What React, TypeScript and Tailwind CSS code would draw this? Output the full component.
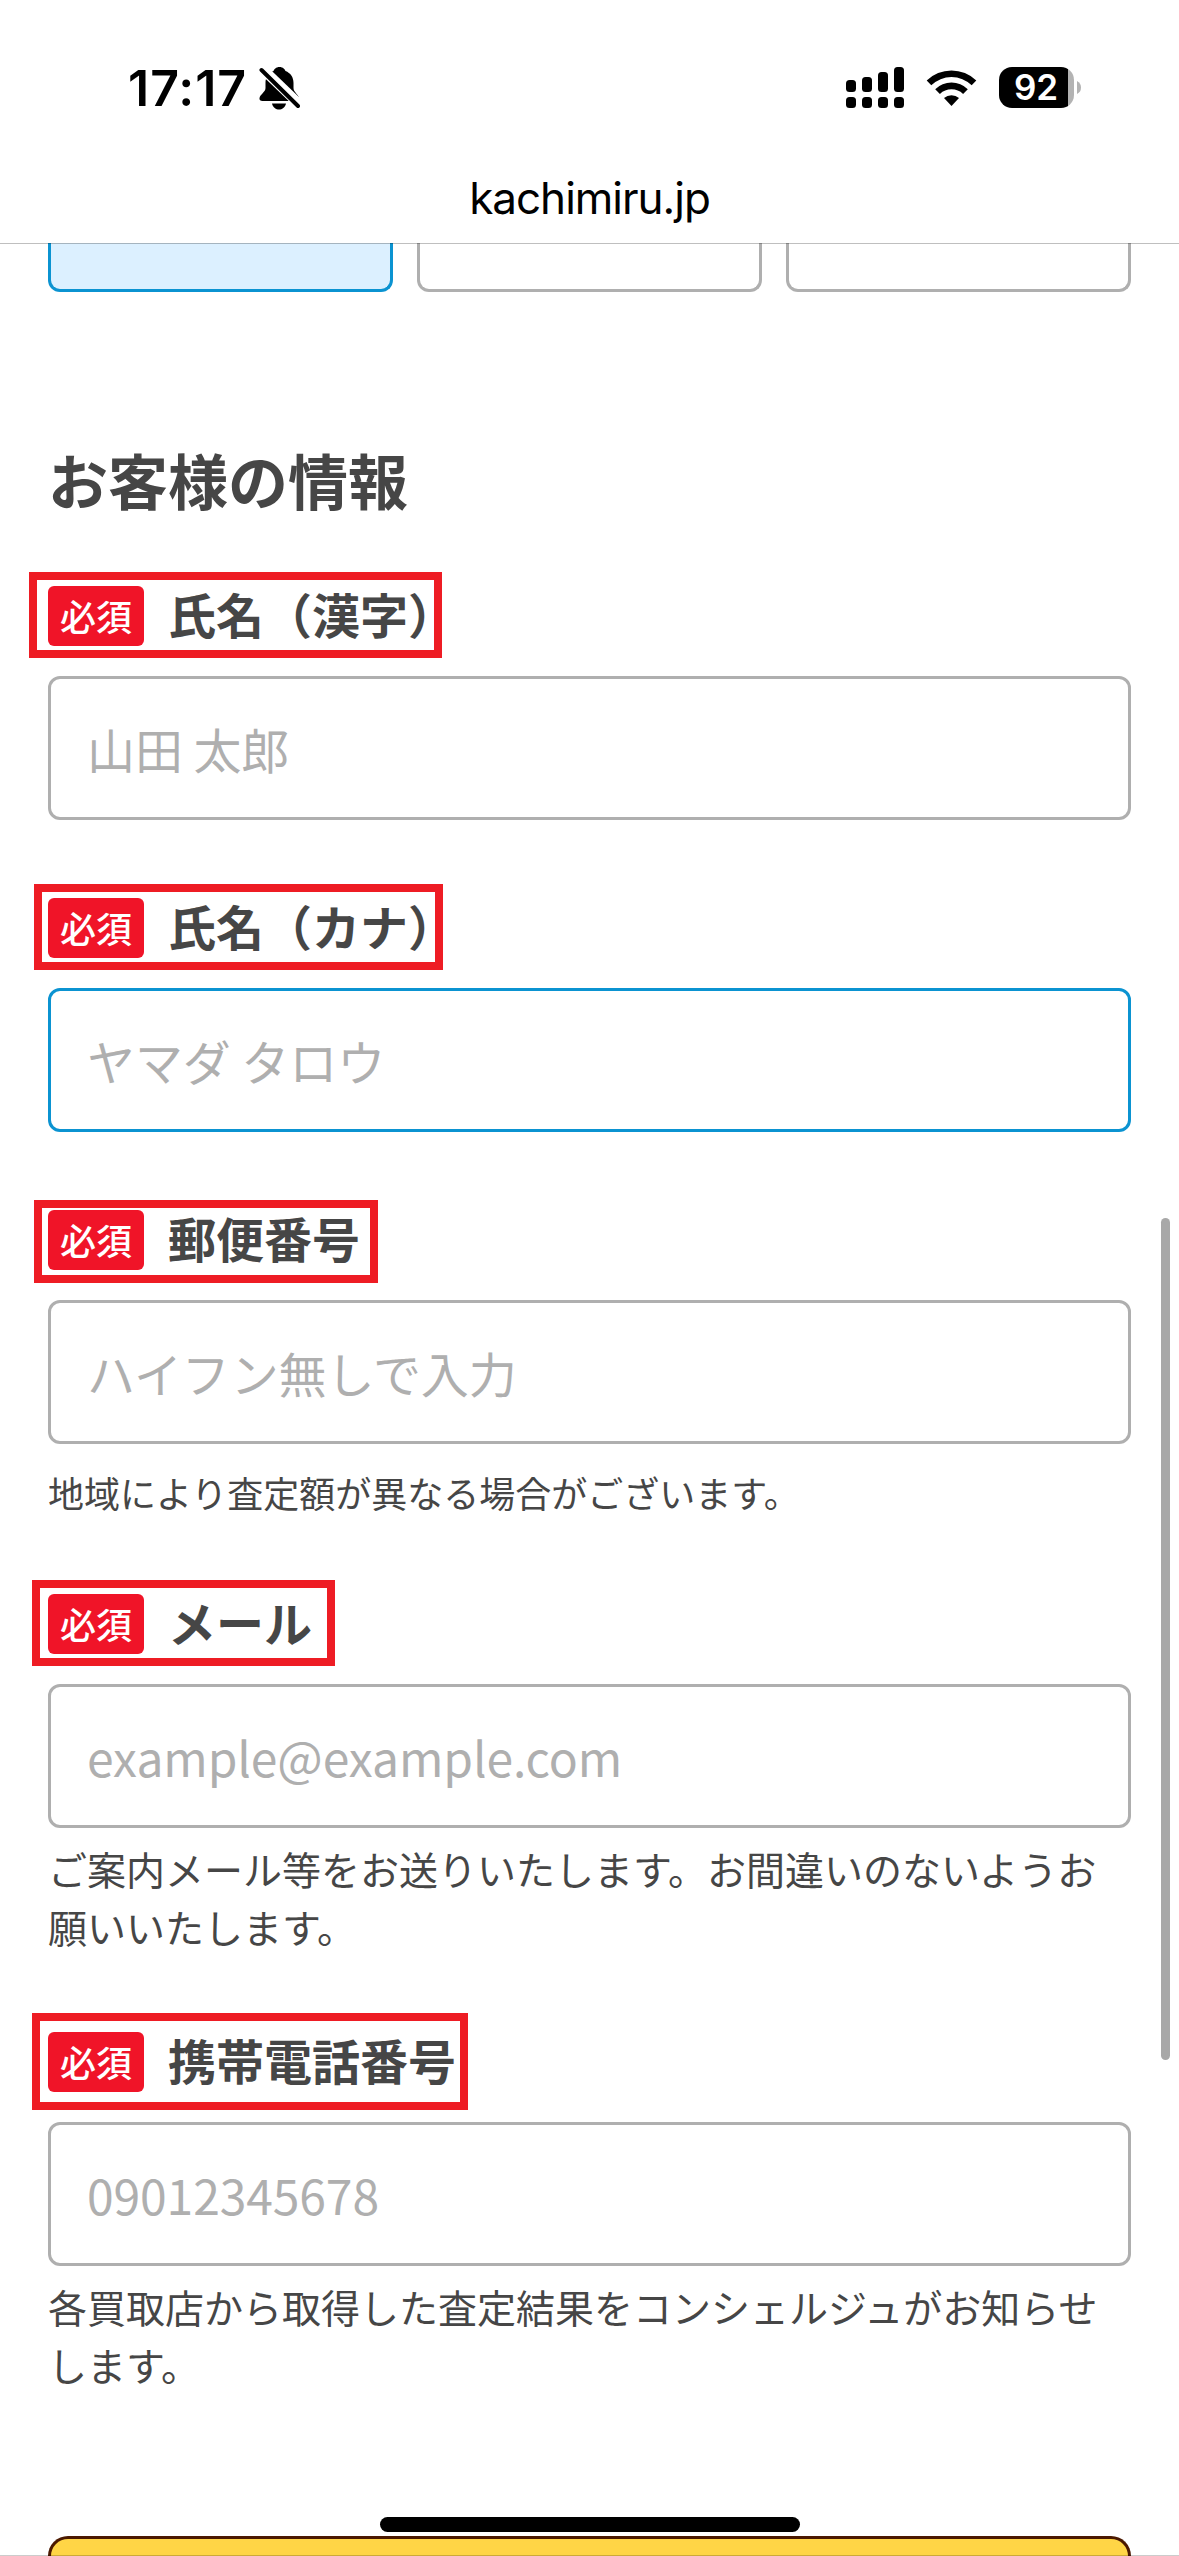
import React from "react";

function Ring({ box }: { box: string }) {
  return <span className={`pointer-events-none absolute border-8 border-[#ee1c24] ${box}`} />;
}

interface FieldProps {
  label: string;
  placeholder: string;
  ring: string;
  focused?: boolean;
  className?: string;
  children?: React.ReactNode;
}

function Field({ label, placeholder, ring, focused, className = "", children }: FieldProps) {
  return (
    <div className={className}>
      <div className="relative flex h-[60px] items-center gap-6">
        <span className="flex h-[60px] w-24 items-center justify-center rounded-[6px] bg-[#f01428] pb-[2px] text-[36px] font-medium leading-[58px] text-white">
          必須
        </span>
        <span className="whitespace-nowrap pb-[6px] text-[48px] font-bold leading-[54px]">{label}</span>
        <Ring box={ring} />
      </div>
      <input
        placeholder={placeholder}
        className={`mt-[30px] block h-36 w-full rounded-[12px] border-3 bg-transparent px-9 text-[48px] tracking-[-0.1px] placeholder:text-[#afafaf] placeholder:opacity-100 ${
          focused ? "border-[#0b93d1]" : "border-[#afafaf]"
        }`}
      />
      {children}
    </div>
  );
}

function StatusBar() {
  return (
    <div className="flex h-[133px] items-start justify-between pl-[128px] pr-[98px] pt-[66px]">
      <div className="flex items-start">
        <span className="-mt-[8px] w-[123px] font-[Inter] text-[50px] font-semibold leading-[60px] tracking-[1px] text-black">
          17:17
        </span>
        <svg width="42" height="44" viewBox="0 0 42 44" className="ml-[8px]">
          <path
            d="M20.500 1c-3.500 0-5.500 2.500-6 4-5 2-8 6-8 12v5c0 4-5 6-6 10-.4 2 1 3 3 3h34c2 0 3-1 2.500-3-1-4-5.500-6-5.500-10v-5c0-6-3-10-8-12-.5-1.500-2.500-4-6-4z"
            fill="#000"
          />
          <path d="M13 37.500h14c-1 4-4 6-7 6s-6-2-7-6z" fill="#000" />
          <path d="M1 0.500L41 39" stroke="#fff" strokeWidth="10" />
          <path d="M2.500 4L39 40" stroke="#000" strokeWidth="4" strokeLinecap="round" />
        </svg>
      </div>
      <div className="flex items-start">
        <svg width="58" height="42" viewBox="0 0 58 42">
          <rect x="0" y="14" width="10" height="12" rx="3.500" />
          <rect x="16" y="11" width="10" height="15" rx="3.500" />
          <rect x="32" y="6" width="10" height="20" rx="3.500" />
          <rect x="48" y="1" width="10" height="25" rx="3.500" />
          <rect x="0" y="31" width="10" height="11" rx="3.500" />
          <rect x="16" y="31" width="10" height="11" rx="3.500" />
          <rect x="32" y="31" width="10" height="11" rx="3.500" />
          <rect x="48" y="31" width="10" height="11" rx="3.500" />
        </svg>
        <svg width="51" height="38" viewBox="0 0 51 38" className="ml-[22px] mt-[3px]">
          <path d="M0.700 11.500a35.500 35.500 0 0 1 49.600 0l-4.600 4.700a29 29 0 0 0-40.400 0z" />
          <path d="M9.200 20.200a23.300 23.300 0 0 1 32.600 0l-4.700 4.700a17 17 0 0 0-23.200 0z" />
          <path d="M18 29a11.500 11.500 0 0 1 15 0l-7.500 8z" />
        </svg>
        <div className="ml-[22px] mt-px flex items-center gap-[3px]">
          <div className="flex h-[41px] w-[75px] items-center justify-center overflow-hidden rounded-[13px] bg-[linear-gradient(90deg,#000_69px,#b3b3b3_69px)] pr-px">
            <span className="font-[Inter] text-[35px] font-semibold leading-[41px] text-white">92</span>
          </div>
          <svg width="4" height="13" viewBox="0 0 4 13">
            <path d="M0 0q4 2 4 6.500t-4 6.500z" fill="#b3b3b3" />
          </svg>
        </div>
      </div>
    </div>
  );
}

export default function App() {
  return (
    <div
      lang="ja"
      className="relative flex h-[2556px] w-[1179px] flex-col overflow-hidden bg-white font-['Noto_Sans_CJK_JP',sans-serif] text-[#464646]"
    >
      <header className="relative h-[243px] shrink-0 bg-white">
        <StatusBar />
        <div className="pt-[35px] text-center font-[Inter] text-[44px] leading-[60px] tracking-[-1px] text-black">
          kachimiru.jp
        </div>
        <div className="absolute left-0 top-full z-10 h-px w-full bg-black/25" />
      </header>

      <main className="flex grow flex-col px-12">
        <div className="grid shrink-0 grid-cols-3 gap-6">
          <div className="h-[49px] rounded-b-[12px] border-3 border-t-0 border-[#0b93d1] bg-[#dcf0ff]" />
          <div className="h-[49px] rounded-b-[12px] border-3 border-t-0 border-[#afafaf]" />
          <div className="h-[49px] rounded-b-[12px] border-3 border-t-0 border-[#afafaf]" />
        </div>

        <h1 className="mt-[142px] text-[60px] font-bold leading-[90px]">お客様の情報</h1>

        <Field
          className="mt-[62px]"
          label="氏名（漢字）"
          placeholder="山田 太郎"
          ring="-left-[19px] -top-[14px] h-[86px] w-[413px]"
        />
        <Field
          className="mt-[78px]"
          label="氏名（カナ）"
          placeholder="ヤマダ タロウ"
          ring="-left-[14px] -top-[14px] h-[86px] w-[409px]"
          focused
        />
        <Field
          className="mt-[78px]"
          label="郵便番号"
          placeholder="ハイフン無しで入力"
          ring="-left-[14px] -top-[10px] h-[83px] w-[344px]"
        >
          <p className="mt-[21px] text-[36px] leading-[54px]">地域により査定額が異なる場合がございます。</p>
        </Field>
        <Field
          className="mt-[75px]"
          label="メール"
          placeholder="example@example.com"
          ring="-left-[16px] -top-[14px] h-[86px] w-[303px]"
        >
          <p className="mt-[11px] text-[39px] leading-[58px]">
            ご案内メール等をお送りいたします。お間違いのないようお願いいたします。
          </p>
        </Field>
        <Field
          className="mt-[77px]"
          label="携帯電話番号"
          placeholder="09012345678"
          ring="-left-[16px] -top-[19px] h-[97px] w-[436px]"
        >
          <p className="mt-[11px] text-[39px] leading-[58px]">
            各買取店から取得した査定結果をコンシェルジュがお知らせします。
          </p>
        </Field>

        <div className="mt-[143px] h-5 shrink-0 rounded-t-[24px] border-3 border-b-0 border-[#4b1900] bg-[#ffd546]" />
      </main>

      <div className="absolute left-[1161px] top-[1218px] h-[842px] w-[9px] rounded-full bg-[#a8a8a8]" />
      <div className="absolute left-[380px] top-[2517px] h-[15px] w-[420px] rounded-full bg-black" />
      <div className="absolute bottom-0 left-0 h-px w-full bg-black/20" />
    </div>
  );
}
